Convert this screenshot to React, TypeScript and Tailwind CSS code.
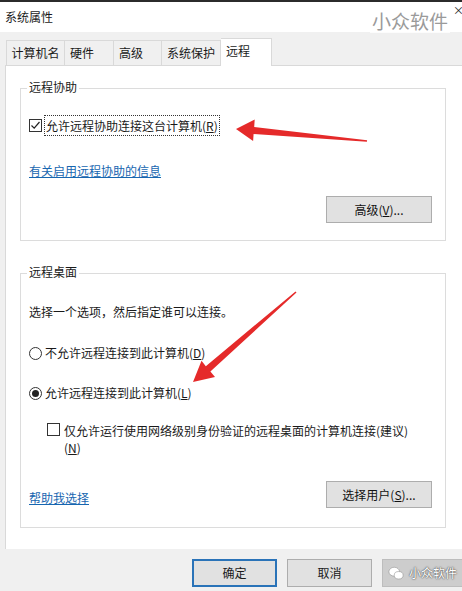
import React from "react";

const font = { fontFamily: '"Noto Sans CJK SC", "Noto Sans", sans-serif' };

function Checkbox({ checked }: { checked?: boolean }) {
  return (
    <span className="w-[13px] h-[13px] border border-[#333] bg-white flex items-center justify-center shrink-0">
      {checked && (
        <svg width="11" height="11" viewBox="0 0 11 11">
          <path d="M1.5 5.5 L4.2 8.2 L9.5 2" fill="none" stroke="#222" strokeWidth="1.2" />
        </svg>
      )}
    </span>
  );
}

function Radio({ checked }: { checked?: boolean }) {
  return (
    <span className="w-[13px] h-[13px] rounded-full border border-[#333] bg-white flex items-center justify-center shrink-0">
      {checked && <span className="w-[7px] h-[7px] rounded-full bg-[#222]" />}
    </span>
  );
}

function Btn({ children, className = "" }: { children: React.ReactNode; className?: string }) {
  return (
    <div
      className={
        "h-[27px] w-[106px] bg-[#e1e1e1] border border-[#adadad] flex items-center justify-center text-[12px] text-[#111] " +
        className
      }
    >
      {children}
    </div>
  );
}

export default function App() {
  return (
    <div
      className="relative w-[462px] h-[591px] bg-[#f0f0f0] overflow-hidden flex flex-col text-[12px] text-[#1a1a1a] leading-none"
      style={font}
    >
      <div className="h-[2px] bg-[#2b2b2b]" />
      {/* title bar */}
      <div className="h-[30px] bg-white flex items-center pl-[5px] text-[12px]">系统属性</div>
      {/* tabs */}
      <div className="h-[33px] flex items-end pl-[6px]">
        <div className="h-[25px] w-[59px] border border-b-0 border-[#d9d9d9] flex items-center justify-center">计算机名</div>
        <div className="h-[25px] w-[49px] border border-b-0 border-l-0 border-[#d9d9d9] flex items-center pl-[5px]">硬件</div>
        <div className="h-[25px] w-[48px] border border-b-0 border-l-0 border-[#d9d9d9] flex items-center pl-[5px]">高级</div>
        <div className="h-[25px] w-[59px] border border-b-0 border-l-0 border-[#d9d9d9] flex items-center justify-center">系统保护</div>
        <div className="relative z-10 -mb-px h-[28px] w-[51px] bg-white border border-b-0 border-l-0 border-[#d9d9d9] flex items-center pl-[5px] pb-[3px]">远程</div>
      </div>
      {/* tab page */}
      <div className="ml-[5px] h-[484px] bg-white border-l border-t border-[#d9d9d9] pl-[14px] pr-[16px] pt-[22px] flex flex-col">
        {/* group 1 */}
        <div className="relative h-[153px] border border-[#dcdcdc] flex flex-col pl-[8px] pr-[13px]">
          <span className="absolute -top-[8px] left-[6px] bg-white px-[2px]">远程协助</span>
          <div className="mt-[26px] flex items-center h-[21px]">
            <Checkbox checked />
            <span className="ml-[2px] h-[21px] border border-dotted border-[#333] flex items-center px-[1px]">
              允许远程协助连接这台计算机(<span className="underline">R</span>)
            </span>
          </div>
          <div className="mt-[27px] h-[16px] flex items-center">
            <span className="text-[#1766b0] underline">有关启用远程协助的信息</span>
          </div>
          <div className="mt-[17px] self-end">
            <Btn>高级(<span className="underline">V</span>)...</Btn>
          </div>
        </div>
        {/* group 2 */}
        <div className="relative mt-[32px] h-[255px] border border-[#dcdcdc] flex flex-col pl-[8px] pr-[13px]">
          <span className="absolute -top-[8px] left-[6px] bg-white px-[2px]">远程桌面</span>
          <div className="mt-[30px] h-[16px] flex items-center">选择一个选项，然后指定谁可以连接。</div>
          <div className="mt-[25px] h-[16px] flex items-center">
            <Radio />
            <span className="ml-[3px]">不允许远程连接到此计算机(<span className="underline">D</span>)</span>
          </div>
          <div className="mt-[24px] h-[16px] flex items-center">
            <Radio checked />
            <span className="ml-[3px]">允许远程连接到此计算机(<span className="underline">L</span>)</span>
          </div>
          <div className="mt-[21px] flex items-start pl-[18px]">
            <span className="mt-[1px]"><Checkbox /></span>
            <div className="ml-[4px] flex flex-col leading-[17px]">
              <span>仅允许运行使用网络级别身份验证的远程桌面的计算机连接(建议)</span>
              <span>(<span className="underline">N</span>)</span>
            </div>
          </div>
          <div className="mt-[25px] flex items-center justify-between">
            <span className="text-[#1766b0] underline mt-[6px]">帮助我选择</span>
            <Btn>选择用户(<span className="underline">S</span>)...</Btn>
          </div>
        </div>
      </div>
      {/* bottom buttons */}
      <div className="flex pl-[192px] pt-[10px] gap-[10px]">
        <div className="h-[28px] w-[85px] shrink-0 bg-[#e1e1e1] border-2 border-[#2a73b8] flex items-center justify-center">确定</div>
        <div className="h-[28px] w-[85px] shrink-0 bg-[#e1e1e1] border border-[#adadad] flex items-center justify-center">取消</div>
        <div className="h-[28px] w-[90px] shrink-0 bg-[#cdcdcd] border border-[#bdbdbd] flex items-center pl-[5px] gap-[5px] whitespace-nowrap">
          <svg width="16" height="15" viewBox="0 0 18 16" className="shrink-0">
            <ellipse cx="7" cy="6" rx="6" ry="5" fill="#fff" stroke="#888" strokeWidth="0.6" />
            <ellipse cx="12" cy="10" rx="5" ry="4.2" fill="#fff" stroke="#888" strokeWidth="0.6" />
          </svg>
          <span className="text-white text-[12px]" style={{ textShadow: "0 0 2px #555, 0 0 1px #333" }}>小众软件</span>
        </div>
      </div>

      {/* title watermark and close */}
      <div className="absolute left-[370px] top-[7px] h-[26px] bg-white/80 px-[2px] flex items-center text-[19px] text-[#9a9a9a] whitespace-nowrap">
        小众软件
      </div>
      <div className="absolute left-[453px] top-[5px] text-[11px] text-[#222]">×</div>

      {/* red arrows */}
      <svg className="absolute left-0 top-0 pointer-events-none" width="462" height="591" viewBox="0 0 462 591">
        <polygon
          points="236,129 254.7,119.5 254.2,127 367.1,140.3 366.9,141.7 253.6,134 253.1,141"
          fill="#e52a2a"
        />
        <polygon
          points="193,382 201.5,360.8 205.8,366.2 295.5,291.4 296.5,292.6 210.4,371.4 215,377"
          fill="#e52a2a"
        />
      </svg>
    </div>
  );
}
